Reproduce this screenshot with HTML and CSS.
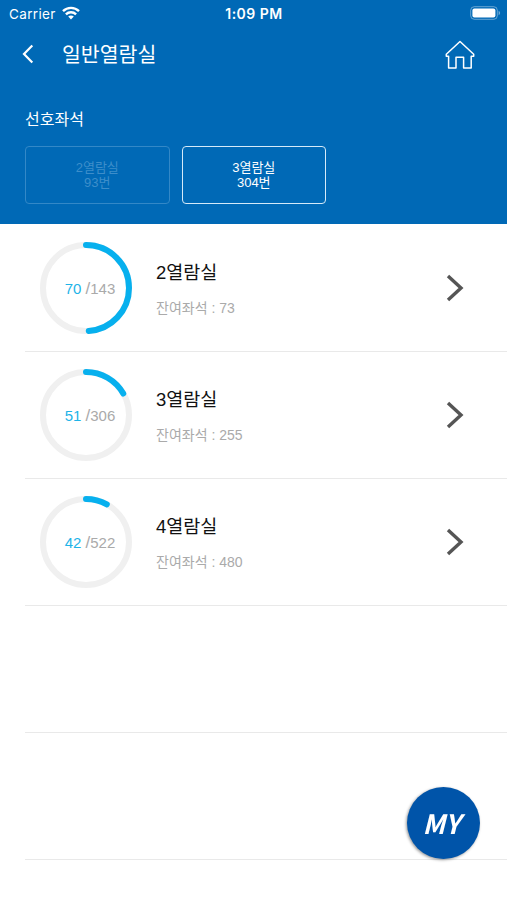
FILE: index.html
```html
<!DOCTYPE html>
<html lang="ko">
<head>
  <meta charset="UTF-8">
  <meta name="viewport" content="width=device-width, initial-scale=1">
  <title>일반열람실</title>
  <link rel="stylesheet" href="styles.css">
</head>
<body>

<header class="header">
  <div class="status-bar">
    <div class="carrier">
      <span>Carrier</span>
      <svg width="18" height="14" viewBox="0 0 18 14" fill="none" stroke="#fff" stroke-width="2.4">
        <path d="M1 5.2C5.5 .8 12.5 .8 17 5.2"/>
        <path d="M3.9 8.3C6.8 5.5 11.2 5.5 14.1 8.3"/>
        <path d="M6.2 10.6C7.8 9 10.2 9 11.8 10.6L9 13.5Z" fill="#fff" stroke="none"/>
      </svg>
    </div>
    <span class="time">1:09 PM</span>
    <svg class="battery" width="31" height="14" viewBox="0 0 31 14">
      <rect x=".7" y=".7" width="26.6" height="12.6" rx="3.6" fill="none" stroke="#fff" stroke-opacity=".4"/>
      <rect x="2.4" y="2.4" width="23" height="9.2" rx="2" fill="#fff"/>
      <path d="M28.6 4.8C30.6 5.6 30.6 8.4 28.6 9.2Z" fill="#fff" fill-opacity=".45"/>
    </svg>
  </div>

  <div class="nav">
    <button class="back">
      <svg width="12" height="20" viewBox="0 0 12 20" fill="none" stroke="#fff" stroke-width="2.2">
        <path d="M10.3 1.5L2 10L10.3 18.5"/>
      </svg>
    </button>
    <h1>일반열람실</h1>
    <button class="home">
      <svg width="30" height="30" viewBox="0 0 30 30" fill="none" stroke="#fff" stroke-width="1.5" stroke-linejoin="round">
        <path d="M15 1.5L1.3 14.3V16.2H3.6V28H11V17.2H18.6V28H26.2V16.2H28.7V14.3Z"/>
      </svg>
    </button>
  </div>

  <h2>선호좌석</h2>
  <div class="seats">
    <button class="seat disabled">2열람실<br>93번</button>
    <button class="seat">3열람실<br>304번</button>
  </div>
</header>

<ul class="rooms">
  <li class="room">
    <div class="ring">
      <svg width="92" height="92" viewBox="0 0 92 92">
        <circle class="track" cx="46" cy="46" r="43"/>
        <circle class="bar" cx="46" cy="46" r="43" pathLength="143" stroke-dasharray="70 143"/>
      </svg>
      <p class="count"><b>70</b> <i>/</i>143</p>
    </div>
    <div class="info">
      <h3>2열람실</h3>
      <p>잔여좌석 : 73</p>
    </div>
    <svg class="arrow" width="18" height="28" viewBox="0 0 18 28"><path d="M2 2L15 14L2 26"/></svg>
  </li>
  <li class="room">
    <div class="ring">
      <svg width="92" height="92" viewBox="0 0 92 92">
        <circle class="track" cx="46" cy="46" r="43"/>
        <circle class="bar" cx="46" cy="46" r="43" pathLength="306" stroke-dasharray="51 306"/>
      </svg>
      <p class="count"><b>51</b> <i>/</i>306</p>
    </div>
    <div class="info">
      <h3>3열람실</h3>
      <p>잔여좌석 : 255</p>
    </div>
    <svg class="arrow" width="18" height="28" viewBox="0 0 18 28"><path d="M2 2L15 14L2 26"/></svg>
  </li>
  <li class="room">
    <div class="ring">
      <svg width="92" height="92" viewBox="0 0 92 92">
        <circle class="track" cx="46" cy="46" r="43"/>
        <circle class="bar" cx="46" cy="46" r="43" pathLength="522" stroke-dasharray="42 522"/>
      </svg>
      <p class="count"><b>42</b> <i>/</i>522</p>
    </div>
    <div class="info">
      <h3>4열람실</h3>
      <p>잔여좌석 : 480</p>
    </div>
    <svg class="arrow" width="18" height="28" viewBox="0 0 18 28"><path d="M2 2L15 14L2 26"/></svg>
  </li>
  <li class="room"></li>
  <li class="room"></li>
</ul>

<button class="my">MY</button>

</body>
</html>
```

FILE: styles.css
```css
* {
  box-sizing: border-box;
  margin: 0;
  padding: 0;
}

body {
  height: 100vh;
  overflow: hidden;
  background: #fff;
  font-family: "Liberation Sans", "Noto Sans CJK KR", sans-serif;
}

svg {
  display: block;
}

button {
  border: none;
  background: none;
  color: #fff;
  font-family: inherit;
  cursor: pointer;
}

.header {
  height: 224px;
  background: #0069b6;
  color: #fff;
}

.status-bar {
  display: grid;
  grid-template-columns: 1fr auto 1fr;
  align-items: center;
  height: 27px;
  padding: 0 6px 0 9px;
  font-family: Inter, sans-serif;
  font-size: 13.5px;
}

.carrier {
  display: flex;
  align-items: center;
  gap: 6px;
  letter-spacing: 0.35px;
}

.carrier svg {
  margin-bottom: 2px;
}

.time {
  margin-left: -2px;
  font-size: 14px;
  font-weight: 600;
  letter-spacing: 0.5px;
}

.battery {
  justify-self: end;
  margin-bottom: 1px;
}

.nav {
  display: flex;
  align-items: center;
  height: 54px;
  padding: 0 32px 0 22px;
}

.nav h1 {
  margin-left: 28px;
  padding-top: 2px;
  font-size: 20.5px;
  font-weight: 400;
  line-height: 30px;
}

.home {
  margin-left: auto;
  padding-top: 1px;
}

.header h2 {
  padding: 27px 0 0 25px;
  font-size: 16px;
  font-weight: 400;
  line-height: 24px;
}

.seats {
  display: flex;
  gap: 12px;
  padding: 14px 25px 0;
}

.seat {
  width: 144.5px;
  height: 58px;
  border: 1.5px solid #d5eaf9;
  border-radius: 4px;
  font-size: 13px;
  line-height: 15px;
}

.seat.disabled {
  border-color: #3388c7;
  color: #3d8eca;
}

.rooms {
  padding: 1px 0 0 25px;
  list-style: none;
}

.room {
  display: flex;
  align-items: center;
  height: 127px;
  padding: 0 43px 0 15px;
  border-bottom: 1px solid #e9e9e9;
}

.ring {
  display: grid;
  place-items: center;
}

.ring svg,
.count {
  grid-area: 1 / 1;
}

.ring circle {
  fill: none;
  stroke-width: 6;
}

.track {
  stroke: #f0f0f0;
}

.bar {
  stroke: #07b0ee;
  stroke-linecap: round;
  transform: rotate(-90deg);
  transform-origin: center;
}

.count {
  padding: 1px 0 0 8px;
  color: #aaa;
  font-size: 15px;
  white-space: nowrap;
}

.count b {
  color: #1eb4e8;
  font-weight: 400;
}

.count i {
  font-size: 17px;
  font-style: normal;
}

.info {
  margin-left: 24px;
}

.info h3 {
  color: #111;
  font-size: 18.5px;
  font-weight: 400;
  line-height: 28px;
}

.info p {
  margin-top: 11px;
  color: #aaa;
  font-size: 14px;
  line-height: 20px;
}

.arrow {
  margin-left: auto;
  fill: none;
  stroke: #555;
  stroke-width: 3.4;
}

.my {
  position: fixed;
  right: 27px;
  bottom: 41px;
  width: 73px;
  height: 72px;
  padding-right: 4px;
  border-radius: 50%;
  background: #0054a9;
  box-shadow: -1px 1px 3px rgba(0, 0, 0, 0.4);
  font-family: "Noto Sans CJK KR", sans-serif;
  font-size: 26.5px;
  font-style: italic;
  font-weight: 700;
  line-height: 30px;
}
```
